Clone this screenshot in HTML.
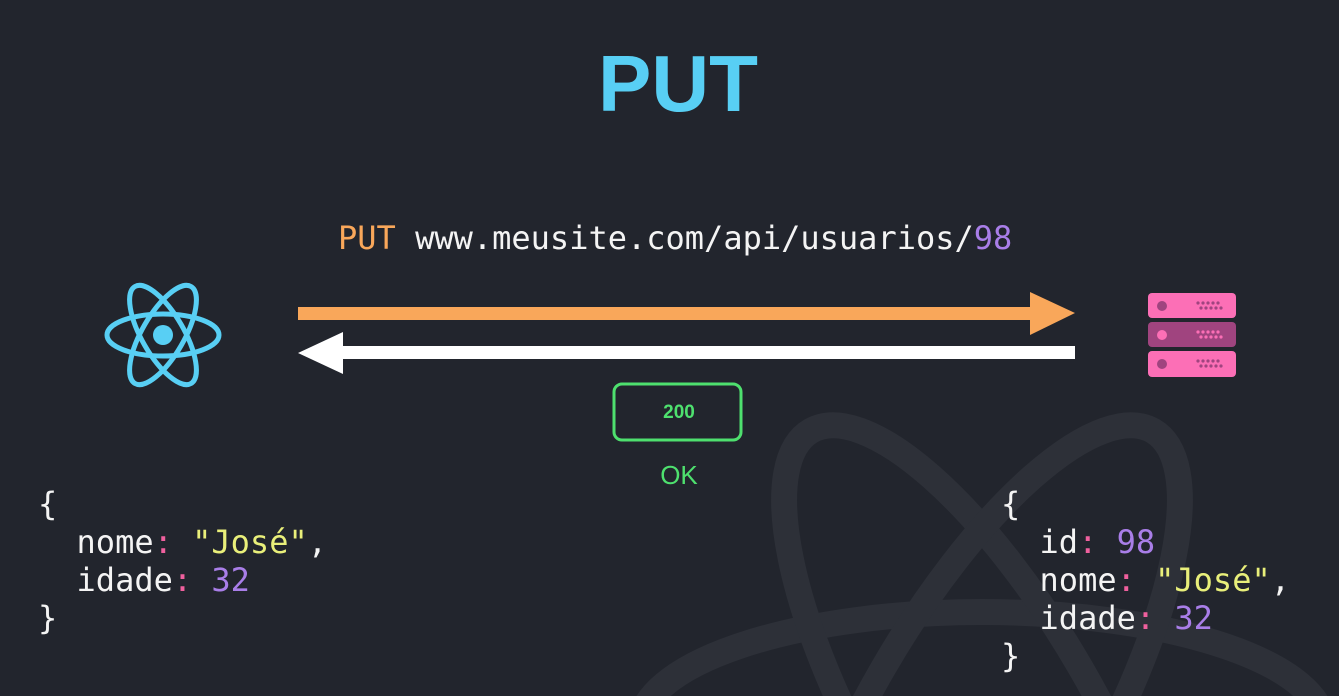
<!DOCTYPE html>
<html style="overflow:hidden"><head><meta charset="utf-8"><style>
html,body{margin:0;width:1339px;height:696px;overflow:hidden}
body{background:#22252d;position:relative;font-family:"DejaVu Sans Mono","Liberation Mono",monospace}
.t{position:absolute;white-space:pre;font-size:32px;color:#f4f4f4;line-height:38px}
.p{color:#f0609e}.s{color:#e9ef7a}.n{color:#a97ee8}.o{color:#f9a75a}
</style></head><body>
<svg width="1339" height="696" style="position:absolute;left:0;top:0">
<g fill="none" stroke="#2d3038" stroke-width="26" transform="translate(982,727)">
<ellipse rx="342" ry="115"/>
<ellipse rx="342" ry="115" transform="rotate(60)"/>
<ellipse rx="342" ry="115" transform="rotate(-60)"/>
</g>
<g fill="none" stroke="#58cff4" stroke-width="5" transform="translate(163,335)">
<ellipse rx="56" ry="21"/>
<ellipse rx="56" ry="21" transform="rotate(60)"/>
<ellipse rx="56" ry="21" transform="rotate(-60)"/>
<circle r="10" fill="#58cff4" stroke="none"/>
</g>
<rect x="298" y="307" width="735" height="13" fill="#f9a75a"/>
<polygon points="1030,292 1075,313 1030,335" fill="#f9a75a"/>
<rect x="340" y="346" width="735" height="13" fill="#fff"/>
<polygon points="343,332 298,353 343,374" fill="#fff"/>
<rect x="1148" y="293" width="88" height="25" rx="4" fill="#fc6fb6"/>
<rect x="1148" y="322" width="88" height="25" rx="4" fill="#a0447f"/>
<rect x="1148" y="351" width="88" height="26" rx="4" fill="#fc6fb6"/>
<circle cx="1162" cy="306" r="5" fill="#a0447f"/><circle cx="1162" cy="335" r="5" fill="#fc6fb6"/><circle cx="1162" cy="364" r="5" fill="#a0447f"/>
<g id="d" fill="#a0447f">
<circle cx="1198" cy="303" r="1.6"/><circle cx="1203" cy="303" r="1.6"/><circle cx="1208" cy="303" r="1.6"/><circle cx="1213" cy="303" r="1.6"/><circle cx="1218" cy="303" r="1.6"/>
<circle cx="1201" cy="308" r="1.6"/><circle cx="1206" cy="308" r="1.6"/><circle cx="1211" cy="308" r="1.6"/><circle cx="1216" cy="308" r="1.6"/><circle cx="1221" cy="308" r="1.6"/>
</g>
<g fill="#a0447f" transform="translate(0,58)">
<circle cx="1198" cy="303" r="1.6"/><circle cx="1203" cy="303" r="1.6"/><circle cx="1208" cy="303" r="1.6"/><circle cx="1213" cy="303" r="1.6"/><circle cx="1218" cy="303" r="1.6"/>
<circle cx="1201" cy="308" r="1.6"/><circle cx="1206" cy="308" r="1.6"/><circle cx="1211" cy="308" r="1.6"/><circle cx="1216" cy="308" r="1.6"/><circle cx="1221" cy="308" r="1.6"/>
</g>
<g fill="#fc6fb6" transform="translate(0,29)">
<circle cx="1198" cy="303" r="1.6"/><circle cx="1203" cy="303" r="1.6"/><circle cx="1208" cy="303" r="1.6"/><circle cx="1213" cy="303" r="1.6"/><circle cx="1218" cy="303" r="1.6"/>
<circle cx="1201" cy="308" r="1.6"/><circle cx="1206" cy="308" r="1.6"/><circle cx="1211" cy="308" r="1.6"/><circle cx="1216" cy="308" r="1.6"/><circle cx="1221" cy="308" r="1.6"/>
</g>
<rect x="614" y="384" width="127" height="56" rx="8" fill="none" stroke="#4ee06e" stroke-width="3"/>
</svg>
<div style="position:absolute;left:0;width:1356px;top:38px;text-align:center;font:bold 80px 'Liberation Sans',sans-serif;color:#58cff4">PUT</div>
<div class="t" style="left:338px;top:219px"><span class="o">PUT</span> www.meusite.com/api/usuarios/<span class="n">98</span></div>
<div style="position:absolute;left:614px;width:130px;top:402px;text-align:center;font:bold 19px 'Liberation Sans',sans-serif;color:#4ee06e">200</div>
<div style="position:absolute;left:614px;width:130px;top:460px;text-align:center;font:26px 'Liberation Sans',sans-serif;color:#4ee06e">OK</div>
<div class="t" style="left:38px;top:485px">{
  nome<span class="p">:</span> <span class="s">"José"</span>,
  idade<span class="p">:</span> <span class="n">32</span>
}</div>
<div class="t" style="left:1001px;top:485px;height:200px;overflow:hidden">{
  id<span class="p">:</span> <span class="n">98</span>
  nome<span class="p">:</span> <span class="s">"José"</span>,
  idade<span class="p">:</span> <span class="n">32</span>
}</div>
</body></html>
